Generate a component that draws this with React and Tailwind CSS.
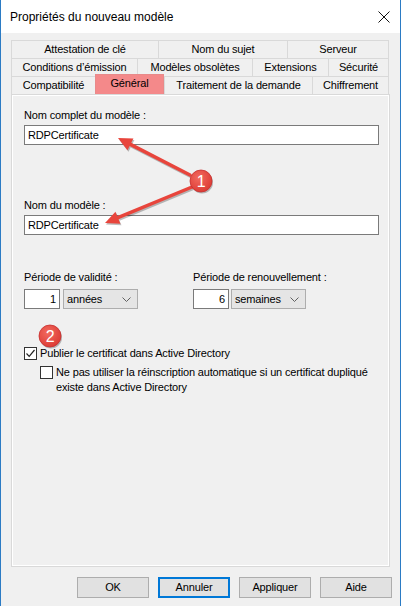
import React from 'react';

const font = { fontFamily: '"Liberation Sans", Arial, sans-serif' };

const TabCell = ({ label, w, last }) => (
  <div
    className={`${w} h-full flex items-center justify-center border-l border-t border-[#d9d9d9] bg-[#f0f0f0] ${last ? 'border-r' : ''}`}
  >
    {label}
  </div>
);

const TextBox = ({ value, className = '' }) => (
  <div className={`h-[20px] border border-[#7a7a7a] bg-white flex items-center px-[3px] ${className}`}>
    {value}
  </div>
);

const Combo = ({ value, className = '' }) => (
  <div className={`h-[20px] border border-[#adadad] bg-[#e5e5e5] flex items-center justify-between pl-[3px] pr-[6px] ${className}`}>
    <span>{value}</span>
    <svg width="9" height="5" viewBox="0 0 9 5">
      <path d="M0.5 0.5 L4.5 4.5 L8.5 0.5" fill="none" stroke="#606060" strokeWidth="1" />
    </svg>
  </div>
);

const Checkbox = ({ checked }) => (
  <div className="w-[13px] h-[13px] shrink-0 border border-[#333] bg-white flex items-center justify-center">
    {checked && (
      <svg width="11" height="11" viewBox="0 0 11 11">
        <path d="M1.5 5.5 L4.2 8.3 L9.5 2" fill="none" stroke="#222" strokeWidth="1.2" />
      </svg>
    )}
  </div>
);

const Button = ({ label, focused }) => (
  <div
    className={`w-[72px] h-[21px] flex items-center justify-center bg-[#e1e1e1] ${
      focused ? 'border-2 border-[#0078d7]' : 'border border-[#adadad]'
    }`}
  >
    {label}
  </div>
);

const Badge = ({ n, cx, cy }) => (
  <g>
    <circle cx={cx + 1} cy={cy + 1.5} r="11" fill="rgba(0,0,0,0.25)" />
    <circle cx={cx} cy={cy} r="11" fill="url(#badgeGrad)" stroke="#c62f2f" strokeWidth="0.8" />
    <text
      x={cx}
      y={cy + 5.5}
      textAnchor="middle"
      fontSize="16"
      fill="#fff"
      style={{ fontFamily: '"Liberation Sans", Arial, sans-serif' }}
    >
      {n}
    </text>
  </g>
);

const Arrow = ({ x1, y1, x2, y2 }) => {
  const ang = Math.atan2(y2 - y1, x2 - x1);
  const len = 14;
  const half = 6.5;
  const bx = x2 - len * Math.cos(ang);
  const by = y2 - len * Math.sin(ang);
  const px = -Math.sin(ang) * half;
  const py = Math.cos(ang) * half;
  const head = `${x2},${y2} ${bx + px},${by + py} ${bx - px},${by - py}`;
  return (
    <g>
      <g transform="translate(1,1.5)" opacity="0.25">
        <line x1={x1} y1={y1} x2={bx} y2={by} stroke="#000" strokeWidth="3.5" />
        <polygon points={head} fill="#000" />
      </g>
      <line x1={x1} y1={y1} x2={bx} y2={by} stroke="#e8453c" strokeWidth="3.5" strokeLinecap="round" />
      <polygon points={head} fill="#e8453c" />
    </g>
  );
};

export default function App() {
  return (
    <div
      className="relative w-[401px] h-[606px] bg-[#f0f0f0] border-x border-[#2b7bc4] flex flex-col text-[11px] tracking-[-0.15px] text-black overflow-hidden"
      style={font}
    >
      {/* Title bar */}
      <div className="h-[33px] shrink-0 bg-white flex items-center justify-between pl-[9px] pr-[10px]">
        <span className="text-[12px] tracking-normal text-black">
          Propriétés du nouveau modèle
        </span>
        <svg width="12" height="12" viewBox="0 0 12 12">
          <path d="M0.5 0.5 L11.5 11.5 M11.5 0.5 L0.5 11.5" stroke="#111" strokeWidth="1" />
        </svg>
      </div>

      {/* Tabs */}
      <div className="pl-[10px] pt-[7px] flex flex-col">
        <div className="flex h-[18px]">
          <TabCell label="Attestation de clé" w="w-[147px]" />
          <TabCell label="Nom du sujet" w="w-[129px]" />
          <TabCell label="Serveur" w="w-[102px]" last />
        </div>
        <div className="flex h-[18px]">
          <TabCell label="Conditions d’émission" w="w-[126px]" />
          <TabCell label="Modèles obsolètes" w="w-[115px]" />
          <TabCell label="Extensions" w="w-[76px]" />
          <TabCell label="Sécurité" w="w-[61px]" last />
        </div>
        <div className="flex h-[18px] items-end">
          <TabCell label="Compatibilité" w="w-[84px]" />
          <div className="w-[69px] h-[20px] flex items-center justify-center bg-[#f4898a] border-x border-t border-[#e88a8a] pb-[2px] relative z-10">
            Général
          </div>
          <TabCell label="Traitement de la demande" w="w-[148px]" />
          <TabCell label="Chiffrement" w="w-[77px]" last />
        </div>
      </div>

      {/* Tab page */}
      <div className="ml-[10px] mr-[10px] h-[473px] border border-[#d9d9d9]">
        <div className="h-full border border-white pl-[11px] pr-[9px] pt-[13px] flex flex-col">
          <div className="h-[13px] leading-[13px]">Nom complet du modèle :</div>
          <TextBox value="RDPCertificate" className="mt-[3px]" />

          <div className="h-[13px] leading-[13px] mt-[54px]">Nom du modèle :</div>
          <TextBox value="RDPCertificate" className="mt-[3px]" />

          <div className="flex mt-[36px]">
            <div className="w-[169px] flex flex-col">
              <div className="h-[13px] leading-[13px]">Période de validité :</div>
              <div className="flex mt-[5px] gap-[3px]">
                <TextBox value={<span className="ml-auto">1</span>} className="w-[36px]" />
                <Combo value="années" className="w-[75px]" />
              </div>
            </div>
            <div className="flex flex-col">
              <div className="h-[13px] leading-[13px]">Période de renouvellement :</div>
              <div className="flex mt-[5px] gap-[2px]">
                <TextBox value={<span className="ml-auto">6</span>} className="w-[36px]" />
                <Combo value="semaines" className="w-[75px]" />
              </div>
            </div>
          </div>

          <div className="flex items-center gap-[3px] mt-[36px]">
            <Checkbox checked />
            <span>Publier le certificat dans Active Directory</span>
          </div>
          <div className="flex items-start gap-[3px] mt-[4px] pl-[16px]">
            <Checkbox />
            <span className="leading-[15px] -mt-[1px]">
              Ne pas utiliser la réinscription automatique si un certificat dupliqué
              <br />
              existe dans Active Directory
            </span>
          </div>
        </div>
      </div>

      {/* Buttons */}
      <div className="flex justify-end gap-[9px] pr-[8px] mt-[10px]">
        <Button label="OK" />
        <Button label="Annuler" focused />
        <Button label="Appliquer" />
        <Button label="Aide" />
      </div>

      {/* Annotations */}
      <svg className="absolute inset-0 pointer-events-none" width="401" height="606" viewBox="0 0 401 606">
        <defs>
          <radialGradient id="badgeGrad" cx="0.4" cy="0.35" r="0.7">
            <stop offset="0" stopColor="#f26a5f" />
            <stop offset="1" stopColor="#dc3a33" />
          </radialGradient>
        </defs>
        <Arrow x1={189} y1={175} x2={117} y2={138} />
        <Arrow x1={191} y1={187} x2={104} y2={223} />
        <Badge n="1" cx={200} cy={181} />
        <Badge n="2" cx={49} cy={336} />
      </svg>
    </div>
  );
}
